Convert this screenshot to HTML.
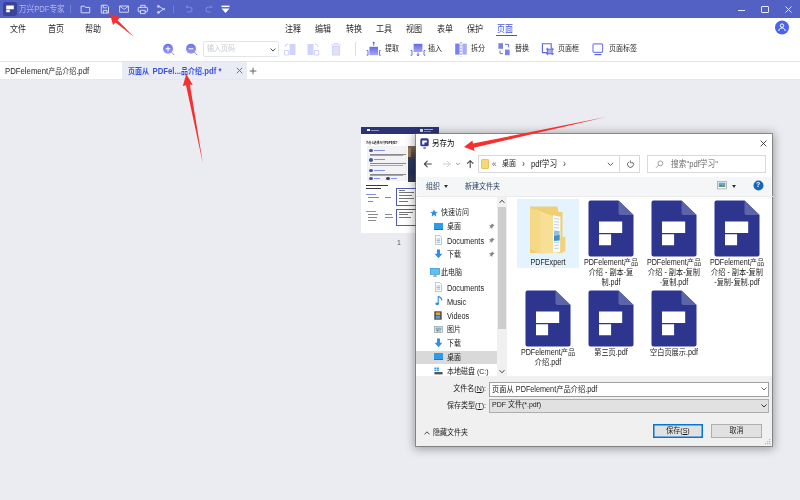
<!DOCTYPE html>
<html lang="zh-CN">
<head>
<meta charset="utf-8">
<title>万兴PDF专家</title>
<style>
*{box-sizing:border-box;margin:0;padding:0}
html,body{width:800px;height:500px;overflow:hidden;background:#ebecf1}
body{position:relative;font-family:"Liberation Sans","Noto Sans CJK SC",sans-serif;font-size:9px;color:#222;-webkit-font-smoothing:antialiased}
.a{position:absolute}
.t{position:absolute;white-space:nowrap;line-height:12px;height:12px;transform:scaleX(.875);transform-origin:0 50%}
.r{transform-origin:100% 50%}
.c{transform-origin:50% 50%}
.l{font-size:8.9px}
#titlebar{left:0;top:0;width:800px;height:20px;background:linear-gradient(180deg,#5461c4 0,#5461c4 18px,#7682d1 18px,#7682d1 19px,#e3e5f6 19px,#e3e5f6 20px)}
#menubar{left:0;top:18px;width:800px;height:43px;background:#fff}
#tabbar{left:0;top:61px;width:800px;height:18px;background:#fff;border-top:1px solid #e4e5ea}
.m{font-size:9.2px;color:#2a2a2a;top:23px}
.tb{font-size:8px;color:#2a2a2a;top:43px}
#dlg{left:416px;top:134px;width:356px;height:312px;background:#fff;box-shadow:0 0 0 1px rgba(95,95,95,.6),0 1px 9px 2px rgba(0,0,0,.34)}
.d{font-size:8px;color:#1a1a1a}
.nv{font-size:8px;color:#1a1a1a;left:31px}
.fl{transform-origin:50% 0;font-size:8.200px;margin-top:.5px;color:#222;text-align:center;line-height:10px;height:auto;white-space:normal}
</style>
</head>
<body>
<div id="root" style="position:absolute;left:0;top:0;width:800px;height:500px;will-change:transform">
<!-- ===== title bar ===== -->
<div class="a" id="titlebar">
  <svg class="a" style="left:3px;top:2px" width="14" height="14" viewBox="0 0 14 14"><rect width="14" height="14" rx="2.5" fill="#3b4399"/><path d="M3.2 3.6h7.6v3.6H6.8v3H3.2V7.4h3.4V6.9H3.2z" fill="#fff"/></svg>
  <div class="t" style="left:19px;top:3px;font-size:8.7px;color:#b3b9ea">万兴PDF专家</div>
  <div class="a" style="left:70px;top:5px;width:1px;height:8px;background:#7480d2"></div>
  <svg class="a" style="left:79.500px;top:4px" width="140" height="11" viewBox="0 0 140 11" fill="none" stroke="#dfe2f8" stroke-width="0.9" stroke-linejoin="round" stroke-linecap="round">
    <!-- folder -->
    <path d="M1.5 2.2h3l1 1.2h4.2v5.4h-8.2z"/>
    <!-- save -->
    <path d="M21.7 1.2h5.2l1.6 1.6v6.2h-6.8z M23.2 1.4v2.4h3.2 M23.4 9v-2.6h3.6v2.6"/>
    <!-- mail -->
    <path d="M40 2h8.4v6.2H40z M40.2 2.4l4 3 4-3"/>
    <!-- print -->
    <path d="M60.800 3.200V1.300h4.400v1.900 M60.600 7.800h-1.800a.6 .6 0 0 1-.6-.6V4a.6 .6 0 0 1 .6-.6h8a.6 .6 0 0 1 .6 .6v3.200a.6 .6 0 0 1-.6 .6h-1.800 M60.800 6.300h4.400v3.300h-4.400z"/>
    <!-- share -->
    <path d="M78.6 2.2l6 3.6 M78.6 8.6l6-4.2" /><circle cx="78.4" cy="2.4" r="1"/><circle cx="78.4" cy="8.4" r="1"/>
  </svg>
  <div class="a" style="left:173px;top:5px;width:1px;height:8px;background:#6f7bd0"></div>
  <svg class="a" style="left:184px;top:4px" width="50" height="11" viewBox="0 0 50 11" fill="none" stroke="#7d87d6" stroke-width="1.1" stroke-linecap="round">
    <path d="M2.200 3.200h3.400a2.400 2.400 0 0 1 0 4.800H3.400 M3.400 2L2.200 3.200"/>
    <path d="M27.800 3.200h-3.400a2.400 2.400 0 0 0 0 4.800h2.200 M26.600 2l1.200 1.200"/>
  </svg>
  <svg class="a" style="left:221px;top:5px" width="9" height="9" viewBox="0 0 9 9"><rect x="0.5" y="0.6" width="8" height="1.5" fill="#fff"/><path d="M0.5 3.4h8L4.5 8z" fill="#fff"/></svg>
  <!-- window controls -->
  <div class="a" style="left:738px;top:9.500px;width:7px;height:1px;background:#e8eafa"></div>
  <div class="a" style="left:761px;top:6px;width:8px;height:7px;border:1px solid #e8eafa;border-radius:1px"></div>
  <svg class="a" style="left:785px;top:6px" width="7" height="7" viewBox="0 0 7 7" stroke="#e8eafa" stroke-width="1"><path d="M0.5 0.5l6 6M6.5 0.5l-6 6"/></svg>
</div>

<!-- ===== menu + toolbar ===== -->
<div class="a" id="menubar"></div>
<div class="t m" style="left:10px">文件</div>
<div class="t m" style="left:48px">首页</div>
<div class="t m" style="left:85px">帮助</div>
<div class="t m" style="left:285px">注释</div>
<div class="t m" style="left:315px">编辑</div>
<div class="t m" style="left:346px">转换</div>
<div class="t m" style="left:376px">工具</div>
<div class="t m" style="left:406px">视图</div>
<div class="t m" style="left:437px">表单</div>
<div class="t m" style="left:467px">保护</div>
<div class="t m" style="left:497px;color:#3f55e6">页面</div>
<div class="a" style="left:496px;top:35px;width:21px;height:1px;background:#3f55e6"></div>
<!-- avatar -->
<svg class="a" style="left:774px;top:20px" width="16" height="16" viewBox="0 0 16 16"><circle cx="8" cy="7.5" r="7" fill="#4a63ee"/><circle cx="8" cy="5.6" r="1.7" fill="none" stroke="#fff" stroke-width="1"/><path d="M4.8 11c0-2 1.4-3 3.2-3s3.2 1 3.2 3" fill="none" stroke="#fff" stroke-width="1"/></svg>

<!-- toolbar icons -->
<svg class="a" style="left:160px;top:40px" width="40" height="18" viewBox="0 0 40 18">
  <defs><linearGradient id="gz" x1="0" y1="0" x2="0" y2="1"><stop offset="0" stop-color="#6f73ec"/><stop offset="1" stop-color="#9698f4"/></linearGradient></defs>
  <circle cx="8" cy="8.800" r="5" fill="url(#gz)"/><path d="M11.600 12.400l2.400 2.400" stroke="#8a8df0" stroke-width="1" stroke-linecap="round"/><path d="M5.600 8.800h4.800M8 6.400v4.800" stroke="#fff" stroke-width="1.100"/>
  <circle cx="31" cy="8.800" r="5" fill="url(#gz)"/><path d="M34.600 12.400l2.400 2.400" stroke="#8a8df0" stroke-width="1" stroke-linecap="round"/><path d="M28.600 8.800h4.800" stroke="#fff" stroke-width="1.100"/>
</svg>
<div class="a" style="left:203px;top:41px;width:76px;height:16px;border:1px solid #e3e4ea;border-radius:2px;background:#fff"></div>
<div class="t" style="left:207px;top:43px;font-size:8px;color:#c8cad2">输入页码</div>
<svg class="a" style="left:270px;top:47.500px" width="6" height="4" viewBox="0 0 6 4"><path d="M0.6 0.6l2.400 2.400L5.400 0.600" fill="none" stroke="#4a4a4a" stroke-width="1"/></svg>
<!-- faded icons -->
<svg class="a" style="left:283px;top:42px" width="64" height="16" viewBox="0 0 64 16">
  <rect x="6.5" y="2" width="6" height="11" fill="#cfd3fa"/><path d="M1.5 13V8.5h4.2V13z" fill="none" stroke="#cfd3fa" stroke-width="1"/><path d="M2 5a3 3 0 0 1 3-3" fill="none" stroke="#cfd3fa" stroke-width="1"/>
  <rect x="24.5" y="2" width="6" height="11" fill="#cfd3fa"/><path d="M31.5 13V8.5h4.2V13z" fill="none" stroke="#cfd3fa" stroke-width="1"/><path d="M35 5a3 3 0 0 0-3-3" fill="none" stroke="#cfd3fa" stroke-width="1"/>
  <rect x="49.5" y="4.5" width="7" height="8.5" fill="#dfe1fb" stroke="#cfd3fa"/><path d="M48 3h10M51 1.5h4" stroke="#cfd3fa" stroke-width="1.2"/>
</svg>
<div class="a" style="left:355px;top:42px;width:1px;height:14px;background:#dcdde3"></div>
<!-- 提取 -->
<svg class="a" style="left:366px;top:41px" width="16" height="16" viewBox="0 0 16 16"><defs><linearGradient id="gp" x1="0" y1="0" x2="0" y2="1"><stop offset="0" stop-color="#6468e6"/><stop offset="1" stop-color="#a4a8f4"/></linearGradient></defs><rect x="3.4" y="5.800" width="8.600" height="8.400" fill="url(#gp)"/><path d="M7.700 1v3.600M6.500 2.200L7.700 1l1.200 1.200" stroke="#5b63e0" stroke-width="1" fill="none"/><path d="M.6 9.500H2v4.700H.6M14.800 9.500h-1.400v4.700h1.400" stroke="#5b63e0" stroke-width="0.9" fill="none"/></svg>
<div class="t tb" style="left:385px">提取</div>
<!-- 插入 -->
<svg class="a" style="left:410px;top:41px" width="16" height="16" viewBox="0 0 16 16"><rect x="3.600" y="2.800" width="8.800" height="8.200" fill="url(#gp)"/><path d="M8 11.400v3.400M6.800 13.600L8 14.800l1.200-1.200" stroke="#5b63e0" stroke-width="1" fill="none"/><path d="M.6 9.500H2v4.700H.6M15.400 9.500H14v4.700h1.400" stroke="#5b63e0" stroke-width="0.9" fill="none"/></svg>
<div class="t tb" style="left:428px">插入</div>
<!-- 拆分 -->
<svg class="a" style="left:454px;top:41px" width="14" height="16" viewBox="0 0 14 16"><rect x="1.2" y="2.6" width="4.4" height="11" fill="#7a80ec"/><rect x="8.4" y="2.6" width="4.4" height="11" fill="#a9adf4"/><path d="M7 1v14.4" stroke="#5b63e0" stroke-width="0.9" stroke-dasharray="1.6 1.2"/></svg>
<div class="t tb" style="left:471px">拆分</div>
<!-- 替换 -->
<svg class="a" style="left:497px;top:41px" width="14" height="16" viewBox="0 0 14 16"><rect x="1.4" y="2.2" width="4.6" height="5.6" fill="#7a80ec"/><rect x="8" y="8.6" width="4.6" height="5.6" fill="#7a80ec"/><path d="M8 3.4h3.6v3M3 9.6v3h3" stroke="#5b63e0" stroke-width="0.9" fill="none"/></svg>
<div class="t tb" style="left:515px">替换</div>
<!-- 页面框 -->
<svg class="a" style="left:540px;top:41px" width="16" height="16" viewBox="0 0 16 16"><path d="M11 11.6H2.4V2.8h8.8v5" stroke="#5b63e0" stroke-width="1.1" fill="none"/><rect x="7.4" y="8.2" width="4.8" height="4.6" fill="#a9adf4"/><path d="M6 8.2h8M6 12.8h8M7.4 6.8v7.4M12.2 6.8v7.4" stroke="#5b63e0" stroke-width="0.9"/></svg>
<div class="t tb" style="left:558px">页面框</div>
<!-- 页面标签 -->
<svg class="a" style="left:591px;top:41px" width="14" height="16" viewBox="0 0 14 16"><rect x="2" y="2.8" width="9.6" height="8.6" rx="1" stroke="#7a80ec" stroke-width="1.2" fill="#fff"/><path d="M3.4 13.6h7" stroke="#5b63e0" stroke-width="1.2"/></svg>
<div class="t tb" style="left:609px">页面标签</div>

<!-- ===== tab bar ===== -->
<div class="a" id="tabbar"></div>
<div class="t" style="left:5px;top:65px;font-size:8px;color:#2a2a2a"><span class="l">PDFelement</span>产品介绍<span class="l">.pdf</span></div>
<div class="a" style="left:122px;top:62px;width:125px;height:17px;background:#e9ebf5"></div>
<div class="t" style="left:128px;top:65px;font-size:8px;color:#3c52e0;font-weight:bold">页面从<span class="l" style="margin-left:4px">PDFel...</span>品介绍<span class="l">.pdf *</span></div>
<svg class="a" style="left:236px;top:67px" width="7" height="7" viewBox="0 0 7 7" stroke="#4a5be0" stroke-width="0.9"><path d="M0.8 0.8l5.4 5.4M6.2 0.8L0.8 6.2"/></svg>
<svg class="a" style="left:249px;top:67px" width="8" height="8" viewBox="0 0 8 8" stroke="#555" stroke-width="0.9"><path d="M4 0.6v6.8M0.6 4h6.8"/></svg>
<div class="a" style="left:0;top:79px;width:800px;height:1px;background:#e6e7ec"></div>

<!-- ===== page thumbnail ===== -->
<div class="a" id="thumb" style="left:361px;top:126.500px;width:78px;height:106px;background:#fff;overflow:hidden">
<div class="a" style="left:0px;top:0px;width:78px;height:7px;background:#2c3478"></div>
<div class="a" style="left:6px;top:2.5px;width:3px;height:2px;background:#fff"></div>
<div class="a" style="left:10px;top:3px;width:8px;height:1px;background:#8e95c8"></div>
<div class="a" style="left:59px;top:2px;width:3px;height:3px;background:#e6e8f6"></div>
<div class="a" style="left:63px;top:2.5px;width:9px;height:1px;background:#aeb3dc"></div>
<div class="a" style="left:63px;top:4.5px;width:7px;height:1px;background:#8e95c8"></div>
<div class="a" style="left:5px;top:14px;font-size:3px;line-height:4px;font-weight:bold;color:#000;transform:scaleX(.9);transform-origin:0 0;white-space:nowrap">为什么选择万兴PDF专家?</div>
<div class="a" style="left:6px;top:19.5px;width:40px;height:35px;background:#f3f3f6"></div>
<div class="a" style="left:8px;top:22px;width:3.500px;height:3.500px;border-radius:50%;background:#4a57a8"></div>
<div class="a" style="left:12.5px;top:23px;width:11px;height:1.3px;background:#7f92e4"></div>
<div class="a" style="left:8.5px;top:27px;width:36px;height:0.9px;background:#8a8a8a"></div>
<div class="a" style="left:8.5px;top:28.8px;width:33px;height:0.9px;background:#a5a5a5"></div>
<div class="a" style="left:8px;top:31.5px;width:3.500px;height:3.500px;border-radius:50%;background:#4a57a8"></div>
<div class="a" style="left:12.5px;top:32.5px;width:11px;height:1.3px;background:#7f92e4"></div>
<div class="a" style="left:8.5px;top:36.5px;width:36px;height:0.9px;background:#8a8a8a"></div>
<div class="a" style="left:8.5px;top:38.3px;width:33px;height:0.9px;background:#a5a5a5"></div>
<div class="a" style="left:8px;top:42px;width:3.500px;height:3.500px;border-radius:50%;background:#4a57a8"></div>
<div class="a" style="left:12.5px;top:43px;width:11px;height:1.3px;background:#7f92e4"></div>
<div class="a" style="left:8.5px;top:47px;width:36px;height:0.9px;background:#8a8a8a"></div>
<div class="a" style="left:8.5px;top:48.8px;width:33px;height:0.9px;background:#a5a5a5"></div>
<div class="a" style="left:8px;top:50px;width:3.5px;height:3.5px;background:#4a57a8;border-radius:50%"></div>
<div class="a" style="left:12.5px;top:51.2px;width:6px;height:1.2px;background:#7f92e4"></div>
<div class="a" style="left:25px;top:50px;width:3.5px;height:3.5px;background:#3a3f60;border-radius:50%"></div>
<div class="a" style="left:30px;top:51.2px;width:6px;height:1.2px;background:#7f92e4"></div>
<div class="a" style="left:46.500px;top:19.500px;width:32px;height:35.500px;background:linear-gradient(180deg,#7a7064 0%,#5a4c40 22%,#2d3a5c 40%,#22315a 75%,#3a3a48 100%)"></div>
<div class="a" style="left:47px;top:21px;width:3px;height:9px;background:#9a7a58"></div>
<div class="a" style="left:5px;top:58.5px;width:22px;height:1.4px;background:#3a3a3a"></div>
<div class="a" style="left:5px;top:61px;width:15px;height:1.4px;background:#3a3a3a"></div>
<div class="a" style="left:5px;top:67px;width:10px;height:1.1px;background:#7f92e4"></div>
<div class="a" style="left:7px;top:70.5px;width:11px;height:0.9px;background:#8a8a8a"></div>
<div class="a" style="left:24px;top:70.5px;width:6px;height:0.9px;background:#8a8a8a"></div>
<div class="a" style="left:7px;top:74.2px;width:5px;height:0.9px;background:#8a8a8a"></div>
<div class="a" style="left:35px;top:61px;width:40px;height:18px;border:1px solid #4f5cb0;background:#fff"></div>
<div class="a" style="left:37.5px;top:63.0px;width:6px;height:0.9px;background:#777"></div>
<div class="a" style="left:37.5px;top:65.8px;width:15px;height:0.9px;background:#777"></div>
<div class="a" style="left:37.5px;top:68.6px;width:13px;height:0.9px;background:#777"></div>
<div class="a" style="left:37.5px;top:71.4px;width:15px;height:0.9px;background:#777"></div>
<div class="a" style="left:37.5px;top:74.2px;width:9px;height:0.9px;background:#777"></div>
<div class="a" style="left:5px;top:84px;width:10px;height:1.1px;background:#7f92e4"></div>
<div class="a" style="left:7px;top:87.8px;width:10px;height:0.9px;background:#8a8a8a"></div>
<div class="a" style="left:24px;top:87.8px;width:7px;height:0.9px;background:#8a8a8a"></div>
<div class="a" style="left:7px;top:90.7px;width:9px;height:0.9px;background:#8a8a8a"></div>
<div class="a" style="left:24px;top:90.7px;width:8px;height:0.9px;background:#8a8a8a"></div>
<div class="a" style="left:7px;top:93.4px;width:8px;height:0.9px;background:#8a8a8a"></div>
<div class="a" style="left:35px;top:82.500px;width:40px;height:17px;border:1px solid #4f5cb0;background:#fff"></div>
<div class="a" style="left:37.5px;top:85.0px;width:14px;height:0.9px;background:#777"></div>
<div class="a" style="left:37.5px;top:87.8px;width:9px;height:0.9px;background:#777"></div>
<div class="a" style="left:37.5px;top:90.6px;width:12px;height:0.9px;background:#777"></div>
</div>
<div class="t" style="left:397px;top:237px;font-size:8px;color:#555">1</div>

<!-- ===== dialog ===== -->
<div class="a" id="dlg">
  <!-- title -->
  <svg class="a" style="left:4px;top:4px" width="9" height="11" viewBox="0 0 9 11"><rect x="0.3" y="0.3" width="8.4" height="8" rx="1.6" fill="#2f3a94"/><path d="M2.2 2.4h4.6v2.2H4.4v1.8H2.2z" fill="#fff"/><rect x="3.4" y="9.4" width="2.4" height="1.2" fill="#2f3a94"/></svg>
  <div class="t d" style="left:16px;top:3px;font-size:8.5px;color:#000">另存为</div>
  <svg class="a" style="left:344px;top:6px" width="7" height="7" viewBox="0 0 7 7" stroke="#222" stroke-width="0.8"><path d="M0.6 0.6l5.8 5.8M6.4 0.6L0.6 6.4"/></svg>
  <!-- nav row -->
  <svg class="a" style="left:6px;top:24px" width="56" height="12" viewBox="0 0 56 12" fill="none" stroke-linecap="round" stroke-linejoin="round">
    <path d="M2.4 6h7M5.2 3.2L2.4 6l2.8 2.8" stroke="#4a4a4a" stroke-width="1.1"/>
    <path d="M21 6h7M25.2 3.2L28 6l-2.8 2.8" stroke="#c8c8c8" stroke-width="0.9"/>
    <path d="M34.4 5.2l1.6 1.6 1.6-1.6" stroke="#777" stroke-width="0.8"/>
    <path d="M48.2 9.6V2.6M45.4 5.4l2.8-2.8 2.8 2.8" stroke="#4a4a4a" stroke-width="1.1"/>
  </svg>
  <div class="a" style="left:62px;top:21px;width:162px;height:18px;border:1px solid #d9d9d9;background:#fff"></div>
  <div class="a" style="left:65px;top:25px;width:8px;height:10px;background:#f7d978;border:0.5px solid #e8c55c;border-radius:1px"></div>
  <div class="t d" style="left:76px;top:24px;color:#555;font-size:9px">«</div>
  <div class="t d" style="left:86px;top:24px">桌面</div>
  <div class="t d" style="left:106px;top:23.500px;color:#444;font-size:10px">›</div>
  <div class="t d" style="left:115px;top:24px;font-size:8.8px">pdf学习</div>
  <div class="t d" style="left:147px;top:23.500px;color:#444;font-size:10px">›</div>
  <svg class="a" style="left:191px;top:28px" width="7" height="5" viewBox="0 0 7 5"><path d="M0.8 0.8l2.7 2.6L6.2 0.8" fill="none" stroke="#555" stroke-width="0.9"/></svg>
  <div class="a" style="left:203px;top:21px;width:1px;height:18px;background:#d9d9d9"></div>
  <svg class="a" style="left:210px;top:26px" width="9" height="9" viewBox="0 0 9 9" fill="none" stroke="#555" stroke-width="0.9"><path d="M6.6 2.2A3 3 0 1 1 3 1.8"/><path d="M4.4 0.4v2.4h2.4" stroke-width="0.8"/></svg>
  <div class="a" style="left:231px;top:21px;width:119px;height:18px;border:1px solid #d9d9d9;background:#fff"></div>
  <svg class="a" style="left:239px;top:26px" width="9" height="9" viewBox="0 0 9 9" fill="none" stroke="#888" stroke-width="0.8"><circle cx="5.4" cy="3.4" r="2.4"/><path d="M3.6 5.2L1 7.8"/></svg>
  <div class="t d" style="left:255px;top:24px;color:#6d6d6d;font-size:8.8px">搜索"pdf学习"</div>
  <!-- command bar -->
  <div class="a" style="left:1px;top:43px;width:354px;height:19px;background:#f5f6f7"></div>
  
  <div class="t d" style="left:10px;top:47px;color:#1e395b">组织</div>
  <div class="a" style="left:28px;top:51px;border:2.5px solid transparent;border-top:3px solid #333;border-bottom:none"></div>
  <div class="t d" style="left:49px;top:47px;color:#1e395b">新建文件夹</div>
  <svg class="a" style="left:301px;top:47px" width="10" height="9" viewBox="0 0 10 9"><rect x="0.5" y="0.5" width="9" height="7.4" fill="#fff" stroke="#9a9a9a" stroke-width="0.7"/><rect x="1.6" y="1.6" width="6.8" height="4.2" fill="#6aa3d8"/><path d="M1.6 5.8l2.2-2 1.8 1.4 1.2-.8 1.6 1.4z" fill="#4f8a4b"/></svg>
  <div class="a" style="left:316px;top:51px;border:2.5px solid transparent;border-top:3px solid #333;border-bottom:none"></div>
  <svg class="a" style="left:337px;top:46px" width="11" height="11" viewBox="0 0 11 11"><circle cx="5.5" cy="5.5" r="5" fill="#1267c4"/></svg>
  <div class="t" style="left:340px;top:45px;font-size:8px;font-weight:bold;color:#fff">?</div>
  <div class="a" style="left:0;top:62px;width:357px;height:1px;background:#ececec"></div>
  <!-- nav pane -->
  <div class="a" id="navp" style="left:0;top:63px;width:81px;height:181px;overflow:hidden">
    <div class="a" style="left:0;top:154px;width:81px;height:13px;background:#d9d9d9"></div>
    <svg class="a" style="left:14px;top:12px" width="8" height="8" viewBox="0 0 8 8"><path d="M4 0.3l1.1 2.4 2.6.3-1.9 1.8.5 2.6L4 6.1 1.7 7.4l.5-2.6L.3 3l2.6-.3z" fill="#2f8fe0"/></svg>
    <div class="t nv" style="left:25px;top:10px">快速访问</div>
    <div class="a" style="left:18px;top:26px;width:9px;height:7px;background:#2e9be6;border-bottom:1.5px solid #1678c8"></div>
    <div class="t nv" style="top:24px">桌面</div>
    <svg class="a" style="left:19px;top:38px" width="7" height="10" viewBox="0 0 7 10"><path d="M0.4 0.4h4.2l2 2v7.2H0.4z" fill="#fff" stroke="#9aa" stroke-width="0.7"/><path d="M1.6 4h3.6M1.6 5.6h3.6M1.6 7.2h3.6" stroke="#5b9bd5" stroke-width="0.7"/></svg>
    <div class="t nv" style="top:38px;font-size:8.400px">Documents</div>
    <svg class="a" style="left:18px;top:52px" width="9" height="10" viewBox="0 0 9 10"><path d="M3 0.4h3v4.4h2.4L4.5 9.2 0.6 4.8H3z" fill="#2f8fe0"/></svg>
    <div class="t nv" style="top:52px">下载</div>
    <svg class="a" style="left:14px;top:71px" width="10" height="9" viewBox="0 0 10 9"><rect x="0.5" y="0.5" width="9" height="5.8" fill="#5cc3f0" stroke="#2c8fcf" stroke-width="0.7"/><path d="M3 8.2h4M5 6.4v1.8" stroke="#777" stroke-width="0.8"/></svg>
    <div class="t nv" style="left:25px;top:70px">此电脑</div>
    <svg class="a" style="left:19px;top:85px" width="7" height="10" viewBox="0 0 7 10"><path d="M0.4 0.4h4.2l2 2v7.2H0.4z" fill="#fff" stroke="#9aa" stroke-width="0.7"/><path d="M1.6 4h3.6M1.6 5.6h3.6M1.6 7.2h3.6" stroke="#5b9bd5" stroke-width="0.7"/></svg>
    <div class="t nv" style="top:85px;font-size:8.400px">Documents</div>
    <svg class="a" style="left:19px;top:99px" width="8" height="10" viewBox="0 0 8 10"><path d="M3.2 7.6V0.6c2 .4 3.6 1.6 3.6 3.8" fill="none" stroke="#2f8fe0" stroke-width="1.1"/><ellipse cx="2.2" cy="7.8" rx="1.8" ry="1.4" fill="#2f8fe0"/></svg>
    <div class="t nv" style="top:99px;font-size:8.400px">Music</div>
    <svg class="a" style="left:18px;top:114px" width="8" height="9" viewBox="0 0 8 9"><rect x="0.3" y="0.3" width="7.4" height="8.4" fill="#4a4a4a"/><rect x="1.8" y="1.4" width="4.4" height="2.8" fill="#e8a33a"/><rect x="1.8" y="4.9" width="4.4" height="2.8" fill="#5b9bd5"/></svg>
    <div class="t nv" style="top:113px;font-size:8.400px">Videos</div>
    <svg class="a" style="left:18px;top:129px" width="9" height="7" viewBox="0 0 9 7"><rect x="0.4" y="0.4" width="8.2" height="6.2" fill="#fff" stroke="#999" stroke-width="0.7"/><rect x="1.4" y="1.4" width="6.2" height="3" fill="#79b4e4"/><path d="M1.4 5.6l2-1.8 1.8 1.2 1-.6 1.4 1.2z" fill="#5a9356"/></svg>
    <div class="t nv" style="top:127px">图片</div>
    <svg class="a" style="left:18px;top:141px" width="9" height="10" viewBox="0 0 9 10"><path d="M3 0.4h3v4.4h2.4L4.5 9.2 0.6 4.8H3z" fill="#2f8fe0"/></svg>
    <div class="t nv" style="top:141px">下载</div>
    <div class="a" style="left:18px;top:156px;width:9px;height:7px;background:#2e9be6;border-bottom:1.5px solid #1678c8"></div>
    <div class="t nv" style="top:155px">桌面</div>
    <svg class="a" style="left:18px;top:170px" width="9" height="8" viewBox="0 0 9 8"><rect x="0.4" y="5" width="8.2" height="2.4" fill="#555"/><path d="M0.4 0.4h2v1.6h-2zM2.9 0.4h2v1.6h-2zM0.4 2.5h2v1.6h-2zM2.9 2.5h2v1.6h-2z" fill="#2f9be8"/></svg>
    <div class="t nv" style="top:169px">本地磁盘 (C:)</div>
  </div>
  <!-- pins -->
  <svg class="a" style="left:73px;top:89px" width="6" height="34" viewBox="0 0 6 34" fill="#8a8a8a"><path d="M3.2 0.4l2.4 2.4-1 .2-1.2 1.6-.2 1.4L1.6 4.4 0.4 5.8V5.2l1-1.4L0 2.4l1.4-.2L3 1z"/><path transform="translate(0,14)" d="M3.2 0.4l2.4 2.4-1 .2-1.2 1.6-.2 1.4L1.6 4.4 0.4 5.8V5.2l1-1.4L0 2.4l1.4-.2L3 1z"/><path transform="translate(0,28)" d="M3.2 0.4l2.4 2.4-1 .2-1.2 1.6-.2 1.4L1.6 4.4 0.4 5.8V5.2l1-1.4L0 2.4l1.4-.2L3 1z"/></svg>
  <!-- scrollbar -->
  <div class="a" style="left:81px;top:63px;width:10px;height:181px;background:#f0f0f0"></div>
  <div class="a" style="left:82px;top:73px;width:8px;height:122px;background:#cdcdcd"></div>
  <svg class="a" style="left:83px;top:65px" width="6" height="5" viewBox="0 0 6 5"><path d="M0.6 3.8L3 1.2l2.4 2.6" fill="none" stroke="#444" stroke-width="1"/></svg>
  <svg class="a" style="left:83px;top:235px" width="6" height="5" viewBox="0 0 6 5"><path d="M0.6 1.2L3 3.8l2.4-2.6" fill="none" stroke="#444" stroke-width="1"/></svg>
  <!-- file pane -->
  <div class="a" style="left:101px;top:65px;width:62px;height:69px;background:#e5f3ff"></div>
  <svg class="a" style="left:112px;top:70px" width="40" height="52" viewBox="0 0 40 52">
    <path d="M2 2.6h27.5l1 5.4h4v41H2z" fill="#efcf73"/>
    <path d="M25 11.300l7.400 1.400V48L25 48.700z" fill="#fdfdfd"/>
    <path d="M26.200 14.500l5 .8M26.200 17.500l5 .7M26.200 20.500l5 .6M26.200 23.500l5 .5M26.200 38.500l5-.2M26.200 41.500l5-.3M26.200 44.500l5-.4" stroke="#a9cbe6" stroke-width="0.9"/>
    <path d="M26 26.500l5.600.4v8.600l-5.600.5z" fill="#8cc0e6"/>
    <path d="M26 32l5.600-1v5.500l-5.600.5z" fill="#3f8fca"/>
    <path d="M7 5.500L25 12v36.700L12 50z" fill="#f7df96"/>
    <path d="M2 3.400L12.200 9v41L2 44.400z" fill="#f5d985"/>
    <path d="M32.400 34l5-1.600v15l-5 .8z" fill="#f1d27a"/>
  </svg>
  <div class="fl t" style="left:101px;top:123px;width:62px">PDFExpert</div>
  <svg class="a" style="left:172px;top:66px" width="46" height="57" viewBox="0 0 46 57"><path d="M2.5 0.5h28L45.5 15v39.5a2 2 0 0 1-2 2h-41a2 2 0 0 1-2-2V2.500a2 2 0 0 1 2-2z" fill="#2d358f"/><path d="M30.5 0.5L45.500 15H32.500a2 2 0 0 1-2-2z" fill="#5c64aa"/><path d="M11 21.400h23.200v11.500H11z M11 34.200h12.100v11H11z" fill="#fff"/></svg><div class="fl t" style="left:163px;top:123px;width:64px">PDFelement产品<br>介绍 - 副本-复<br>制.pdf</div>
<svg class="a" style="left:235px;top:66px" width="46" height="57" viewBox="0 0 46 57"><path d="M2.5 0.5h28L45.5 15v39.5a2 2 0 0 1-2 2h-41a2 2 0 0 1-2-2V2.500a2 2 0 0 1 2-2z" fill="#2d358f"/><path d="M30.5 0.5L45.500 15H32.500a2 2 0 0 1-2-2z" fill="#5c64aa"/><path d="M11 21.400h23.200v11.500H11z M11 34.200h12.100v11H11z" fill="#fff"/></svg><div class="fl t" style="left:226px;top:123px;width:64px">PDFelement产品<br>介绍 - 副本-复制<br>-复制.pdf</div>
<svg class="a" style="left:298px;top:66px" width="46" height="57" viewBox="0 0 46 57"><path d="M2.5 0.5h28L45.5 15v39.5a2 2 0 0 1-2 2h-41a2 2 0 0 1-2-2V2.500a2 2 0 0 1 2-2z" fill="#2d358f"/><path d="M30.5 0.5L45.500 15H32.500a2 2 0 0 1-2-2z" fill="#5c64aa"/><path d="M11 21.400h23.200v11.500H11z M11 34.200h12.100v11H11z" fill="#fff"/></svg><div class="fl t" style="left:289px;top:123px;width:64px">PDFelement产品<br>介绍 - 副本-复制<br>-复制-复制.pdf</div>
<svg class="a" style="left:109px;top:156px" width="46" height="57" viewBox="0 0 46 57"><path d="M2.5 0.5h28L45.5 15v39.5a2 2 0 0 1-2 2h-41a2 2 0 0 1-2-2V2.500a2 2 0 0 1 2-2z" fill="#2d358f"/><path d="M30.5 0.5L45.500 15H32.500a2 2 0 0 1-2-2z" fill="#5c64aa"/><path d="M11 21.400h23.200v11.500H11z M11 34.200h12.100v11H11z" fill="#fff"/></svg><div class="fl t" style="left:100px;top:213px;width:64px">PDFelement产品<br>介绍.pdf</div>
<svg class="a" style="left:172px;top:156px" width="46" height="57" viewBox="0 0 46 57"><path d="M2.5 0.5h28L45.5 15v39.5a2 2 0 0 1-2 2h-41a2 2 0 0 1-2-2V2.500a2 2 0 0 1 2-2z" fill="#2d358f"/><path d="M30.5 0.5L45.500 15H32.500a2 2 0 0 1-2-2z" fill="#5c64aa"/><path d="M11 21.400h23.200v11.500H11z M11 34.200h12.100v11H11z" fill="#fff"/></svg><div class="fl t" style="left:163px;top:213px;width:64px">第三页.pdf</div>
<svg class="a" style="left:235px;top:156px" width="46" height="57" viewBox="0 0 46 57"><path d="M2.5 0.5h28L45.5 15v39.5a2 2 0 0 1-2 2h-41a2 2 0 0 1-2-2V2.500a2 2 0 0 1 2-2z" fill="#2d358f"/><path d="M30.5 0.5L45.500 15H32.500a2 2 0 0 1-2-2z" fill="#5c64aa"/><path d="M11 21.400h23.200v11.500H11z M11 34.200h12.100v11H11z" fill="#fff"/></svg><div class="fl t" style="left:226px;top:213px;width:64px">空白页展示.pdf</div>

  <!-- bottom -->
  <div class="a" style="left:0;top:242px;width:356px;height:70px;background:#f0f0f0"></div>
  <div class="t d r" style="left:0;top:249px;width:70px;text-align:right">文件名(<u>N</u>):</div>
  <div class="a" style="left:73px;top:248px;width:280px;height:15px;border:1px solid #a0a0a0;background:#fff"></div>
  <div class="t d" style="left:76px;top:249px;font-size:8.3px">页面从 PDFelement产品介绍.pdf</div>
  <svg class="a" style="left:345px;top:253px" width="6" height="4" viewBox="0 0 6 4"><path d="M0.5 0.5L3 3l2.5-2.5" fill="none" stroke="#555" stroke-width="0.9"/></svg>
  <div class="t d r" style="left:0;top:266px;width:70px;text-align:right">保存类型(<u>T</u>):</div>
  <div class="a" style="left:73px;top:265px;width:280px;height:14px;border:1px solid #adadad;background:#e1e1e1"></div>
  <div class="t d" style="left:76px;top:265px">PDF 文件(*.pdf)</div>
  <svg class="a" style="left:345px;top:270px" width="6" height="4" viewBox="0 0 6 4"><path d="M0.5 0.5L3 3l2.5-2.5" fill="none" stroke="#333" stroke-width="1"/></svg>
  <svg class="a" style="left:8px;top:297px" width="6" height="4" viewBox="0 0 6 4"><path d="M0.5 3.4L3 0.8l2.5 2.6" fill="none" stroke="#333" stroke-width="0.9"/></svg>
  <div class="t d" style="left:17px;top:293px">隐藏文件夹</div>
  <div class="a" style="left:237px;top:290px;width:50px;height:14px;border:1px solid #0078d7;box-shadow:inset 0 0 0 0.5px #0078d7;background:#e1e1e1"></div>
  <div class="t d c" style="left:237px;top:291px;width:50px;text-align:center">保存(<u>S</u>)</div>
  <div class="a" style="left:295px;top:290px;width:51px;height:14px;border:1px solid #adadad;background:#e1e1e1"></div>
  <svg class="a" style="left:349px;top:305px" width="6" height="6" viewBox="0 0 6 6" fill="#b8b8b8"><rect x="4" y="0" width="1.2" height="1.2"/><rect x="2" y="2" width="1.2" height="1.2"/><rect x="4" y="2" width="1.2" height="1.2"/><rect x="0" y="4" width="1.2" height="1.2"/><rect x="2" y="4" width="1.2" height="1.2"/><rect x="4" y="4" width="1.2" height="1.2"/></svg>
  <div class="t d c" style="left:295px;top:291px;width:51px;text-align:center">取消</div>
</div>

<!-- ===== red arrows ===== -->
<svg class="a" style="left:0;top:0;pointer-events:none" width="800" height="500" viewBox="0 0 800 500">
  <g fill="#f5302f">
    <path d="M110 14 L120.2 17 L117.6 20.2 L134 37 L115.6 22.4 L113 25z"/>
    <path d="M186.300 74 L192.800 85 L189.900 84.600 L203 164 L186 85.200 L182.800 86z"/>
    <path d="M464 147 L472.4 140.400 L473 143.600 L606 117 L473.800 147.800 L474.600 151z"/>
  </g>
</svg>
</div>
</body>
</html>
